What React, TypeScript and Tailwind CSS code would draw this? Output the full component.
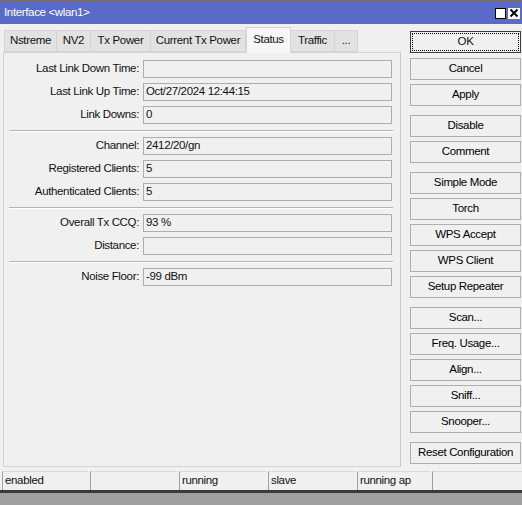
import React from "react";

type Row = { label: string; value: string };

const sections: Row[][] = [
  [
    { label: "Last Link Down Time:", value: "" },
    { label: "Last Link Up Time:", value: "Oct/27/2024 12:44:15" },
    { label: "Link Downs:", value: "0" },
  ],
  [
    { label: "Channel:", value: "2412/20/gn" },
    { label: "Registered Clients:", value: "5" },
    { label: "Authenticated Clients:", value: "5" },
  ],
  [
    { label: "Overall Tx CCQ:", value: "93 %" },
    { label: "Distance:", value: "" },
  ],
  [{ label: "Noise Floor:", value: "-99 dBm" }],
];

const tabs = [
  { name: "Nstreme", w: "w-[53px]" },
  { name: "NV2", w: "w-[34px]" },
  { name: "Tx Power", w: "w-[60px]" },
  { name: "Current Tx Power", w: "w-[95px]" },
  { name: "Status", w: "w-[45px]", active: true },
  { name: "Traffic", w: "w-[44px]" },
  { name: "...", w: "w-[23px]" },
];

const buttonGroups = [
  ["Cancel", "Apply"],
  ["Disable", "Comment"],
  ["Simple Mode", "Torch", "WPS Accept", "WPS Client", "Setup Repeater"],
  ["Scan...", "Freq. Usage...", "Align...", "Sniff...", "Snooper..."],
  ["Reset Configuration"],
];

const statusCells = [
  { text: "enabled", w: "w-[86px]" },
  { text: "", w: "w-[87px]" },
  { text: "running", w: "w-[87px]" },
  { text: "slave", w: "w-[87px]" },
  { text: "running ap", w: "w-[73px]" },
  { text: "", w: "flex-1" },
];

const Btn = ({ label }: { label: string }) => (
  <div className="flex h-[22px] items-center justify-center border border-[#adadad] bg-[#f0f0f0] text-black">
    {label}
  </div>
);

export default function App() {
  return (
    <div className="flex h-[505px] w-[522px] flex-col overflow-hidden bg-[#f0f0f0] font-['Liberation_Sans',Arial,sans-serif] text-[11.5px] leading-none tracking-[-0.35px] text-[#111]">
      {/* title bar */}
      <div className="flex h-[24px] items-center border-t-[2px] border-[#707070] bg-[#5a6ac8] pl-[4px] pr-[2px]">
        <span className="text-white">Interface &lt;wlan1&gt;</span>
        <div className="ml-auto flex items-center gap-[2px]">
          <div className="h-[11px] w-[11px] border border-black bg-white" />
          <div className="flex h-[11px] w-[12px] items-center justify-center bg-white">
            <svg width="10" height="10" viewBox="0 0 10 10">
              <path d="M1.5 1.5 L8.5 8.5 M8.5 1.5 L1.5 8.5" stroke="#000" strokeWidth="2" />
            </svg>
          </div>
        </div>
      </div>

      <div className="flex">
        {/* left: tabs and panel */}
        <div className="ml-[3px] w-[398px]">
          <div className="mt-[3px] flex h-[25px] items-end pl-[1px]">
            {tabs.map((t) =>
              t.active ? (
                <div
                  key={t.name}
                  className={`${t.w} relative z-10 -mb-px flex h-[26px] items-center justify-center border border-b-0 border-[#d4d4d4] bg-[#f7f7f7] pb-[2px]`}
                >
                  {t.name}
                </div>
              ) : (
                <div
                  key={t.name}
                  className={`${t.w} flex h-[22px] items-center justify-center border border-l-0 border-[#d4d4d4] bg-[#e2e2e2] first:border-l`}
                >
                  {t.name}
                </div>
              )
            )}
          </div>
          <div className="h-[415px] border border-[#d4d4d4] border-r-[#c8c8c8] pt-[7px]">
            {sections.map((rows, i) => (
              <div key={i}>
                {i > 0 && (
                  <div className="mb-[5px] ml-[5px] mt-[6px] h-[2px] w-[384px] border-t border-b border-t-[#b4b4b4] border-b-white" />
                )}
                <div className="flex flex-col gap-[5px]">
                  {rows.map((r) => (
                    <div key={r.label} className="flex items-center">
                      <div className="w-[135px] text-right">{r.label}</div>
                      <div className="ml-[4px] flex h-[18px] w-[249px] items-center border border-[#adadad] bg-[#f0f0f0] pl-[2px]">
                        {r.value}
                      </div>
                    </div>
                  ))}
                </div>
              </div>
            ))}
          </div>
        </div>

        {/* right: buttons */}
        <div className="ml-[9px] mt-[7px] flex w-[111px] flex-col">
          <div className="flex h-[22px] items-center justify-center border border-[#3c3c3c] bg-[#f0f0f0] p-[1px]">
            <div className="flex h-full w-full items-center justify-center border border-dotted border-black">
              OK
            </div>
          </div>
          {buttonGroups.map((g, i) => (
            <div key={i} className={`flex flex-col gap-[4px] ${i === 0 ? "mt-[5px]" : "mt-[9px]"}`}>
              {g.map((b) => (
                <Btn key={b} label={b} />
              ))}
            </div>
          ))}
        </div>
      </div>

      {/* status bar */}
      <div className="ml-[2px] mt-[4px] flex h-[19px] gap-[2px]">
        {statusCells.map((c, i) => (
          <div
            key={i}
            className={`${c.w} flex items-center border-l border-t border-l-[#a0a0a0] border-t-[#dadada] pl-[2px]`}
          >
            {c.text}
          </div>
        ))}
      </div>
      <div className="h-[3px] bg-[#3a3a3a]" />
      <div className="flex-1 bg-[#a0a0a0]" />
    </div>
  );
}
